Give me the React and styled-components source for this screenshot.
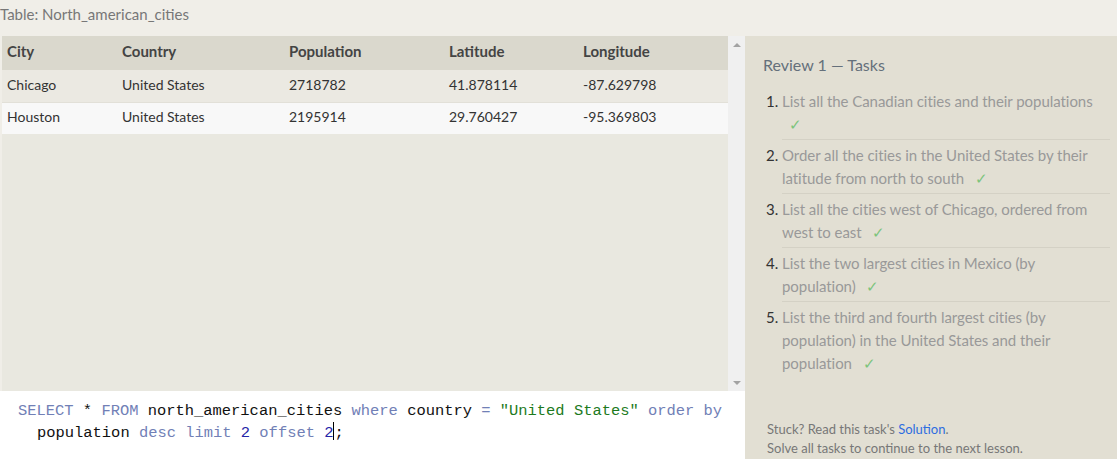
import React from "react";
import styled, { createGlobalStyle } from "styled-components";

const Global = createGlobalStyle`
  html, body { margin: 0; padding: 0; background: #f0eee8; }
  body { font-family: Lato, "Open Sans", sans-serif; }
  * { box-sizing: border-box; }
`;

const Page = styled.div`
  width: 1117px;
  height: 459px;
  display: flex;
  flex-direction: column;
  overflow: hidden;
  background: #f0eee8;
`;

const TopLabel = styled.div`
  height: 36px;
  padding: 5px 0 0 0;
  font-size: 15px;
  color: #777;
  line-height: 19px;
`;

const Main = styled.div`
  flex: 1;
  display: flex;
  min-height: 0;
`;

const LeftPanel = styled.div`
  width: 745px;
  display: flex;
  flex-direction: column;
`;

const TableArea = styled.div`
  height: 355px;
  display: flex;
  padding-left: 2px;
`;

const TableScroll = styled.div`
  flex: 1;
  background: #e9e8e0;
`;

const Table = styled.table`
  width: 100%;
  border-collapse: collapse;
  font-size: 14px;
  color: #333;
`;

const Th = styled.th`
  text-align: left;
  font-weight: bold;
  font-size: 15px;
  color: #444;
  height: 34px;
  padding: 0 0 4px 5px;
  width: ${(p) => p.$w || "auto"};
`;

const HeadRow = styled.tr`
  background: #dad8cd;
`;

const Row = styled.tr`
  background: ${(p) => (p.$alt ? "#f8f8f8" : "#ebe9e2")};
  border-top: 1px solid ${(p) => (p.$alt ? "#e2e0d8" : "transparent")};
`;

const Td = styled.td`
  height: 32px;
  padding: 0 0 3px 5px;
`;

const Scrollbar = styled.div`
  width: 17px;
  background: #f0f0f0;
  display: flex;
  flex-direction: column;
  justify-content: space-between;
  align-items: center;
  padding: 7px 0 6px;
`;

const Arrow = styled.div`
  width: 0;
  height: 0;
  border-left: 4px solid transparent;
  border-right: 4px solid transparent;
  ${(p) =>
    p.$down
      ? "border-top: 4px solid #a3a3a3;"
      : "border-bottom: 4px solid #a3a3a3;"}
`;

const Editor = styled.div`
  flex: 1;
  background: #fff;
  padding: 9px 0 0 18px;
  font-family: "Liberation Mono", monospace;
  font-size: 15.45px;
  line-height: 22px;
  color: #111;
  white-space: pre;
`;

const Line = styled.div`
  padding-left: ${(p) => (p.$indent ? "19px" : "0")};
`;

const Kw = styled.span`
  color: #7180b6;
`;
const Str = styled.span`
  color: #1d7a1d;
`;
const Num = styled.span`
  color: #2525a8;
`;
const Cursor = styled.span`
  display: inline-block;
  width: 0;
  height: 18px;
  border-left: 1.5px solid #000;
  vertical-align: -3px;
`;

const RightPanel = styled.div`
  flex: 1;
  background: #e2dfd3;
  padding: 18px 7px 0 18px;
  display: flex;
  flex-direction: column;
`;

const Title = styled.h2`
  margin: 0;
  font-weight: normal;
  font-size: 16px;
  line-height: 22px;
  color: #65707b;
`;

const List = styled.ol`
  margin: 10px 0 0;
  padding: 0 0 0 19px;
  color: #999;
  font-size: 15px;
  line-height: 23px;
  letter-spacing: -0.05px;
`;

const Item = styled.li`
  padding: 4px 0 3px;
  border-bottom: ${(p) => (p.$last ? "none" : "1px solid #d4d1c5")};
  &::marker {
    color: #333;
  }
`;

const Check = styled.span`
  color: #7cc47c;
  margin-left: 7px;
`;

const Footer = styled.div`
  margin-top: auto;
  padding: 0 0 1px 4px;
  font-size: 13px;
  line-height: 19px;
  color: #777;
`;

const Link = styled.a`
  color: #2e6de0;
  text-decoration: none;
`;

const tasks = [
  "List all the Canadian cities and their populations",
  "Order all the cities in the United States by their latitude from north to south",
  "List all the cities west of Chicago, ordered from west to east",
  "List the two largest cities in Mexico (by population)",
  "List the third and fourth largest cities (by population) in the United States and their population",
];

const rows = [
  ["Chicago", "United States", "2718782", "41.878114", "-87.629798"],
  ["Houston", "United States", "2195914", "29.760427", "-95.369803"],
];

export default function App() {
  return (
    <Page>
      <Global />
      <TopLabel>Table: North_american_cities</TopLabel>
      <Main>
        <LeftPanel>
          <TableArea>
            <TableScroll>
              <Table>
                <thead>
                  <HeadRow>
                    <Th $w="115px">City</Th>
                    <Th $w="167px">Country</Th>
                    <Th $w="160px">Population</Th>
                    <Th $w="134px">Latitude</Th>
                    <Th>Longitude</Th>
                  </HeadRow>
                </thead>
                <tbody>
                  {rows.map((r, i) => (
                    <Row key={i} $alt={i % 2 === 1}>
                      {r.map((c, j) => (
                        <Td key={j}>{c}</Td>
                      ))}
                    </Row>
                  ))}
                </tbody>
              </Table>
            </TableScroll>
            <Scrollbar>
              <Arrow />
              <Arrow $down />
            </Scrollbar>
          </TableArea>
          <Editor>
            <Line>
              <Kw>SELECT</Kw> * <Kw>FROM</Kw> north_american_cities <Kw>where</Kw>{" "}
              country <Kw>=</Kw> <Str>"United States"</Str> <Kw>order</Kw>{" "}
              <Kw>by</Kw>
            </Line>
            <Line $indent>
              population <Kw>desc</Kw> <Kw>limit</Kw> <Num>2</Num>{" "}
              <Kw>offset</Kw> <Num>2</Num>
              <Cursor />;
            </Line>
          </Editor>
        </LeftPanel>
        <RightPanel>
          <Title>Review 1 — Tasks</Title>
          <List>
            {tasks.map((t, i) => (
              <Item key={i} $last={i === tasks.length - 1}>
                {t} <Check>✓</Check>
              </Item>
            ))}
          </List>
          <Footer>
            Stuck? Read this task's <Link href="#">Solution</Link>.
            <br />
            Solve all tasks to continue to the next lesson.
          </Footer>
        </RightPanel>
      </Main>
    </Page>
  );
}
